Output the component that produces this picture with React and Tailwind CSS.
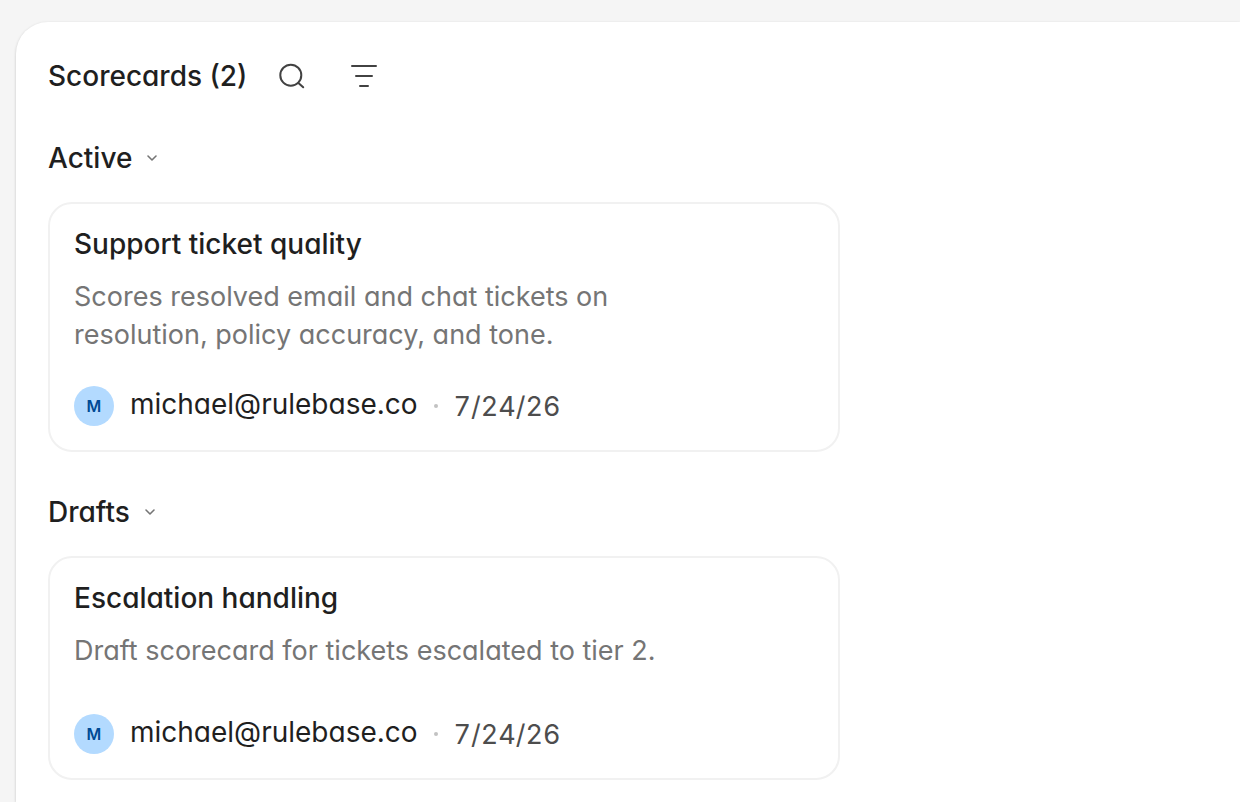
import { useState } from 'react';

const scorecards = [
  {
    id: 1,
    status: 'active',
    title: 'Support ticket quality',
    description: 'Scores resolved email and chat tickets on resolution, policy accuracy, and tone.',
    owner: 'michael@rulebase.co',
    date: '7/24/26',
  },
  {
    id: 2,
    status: 'draft',
    title: 'Escalation handling',
    description: 'Draft scorecard for tickets escalated to tier 2.',
    owner: 'michael@rulebase.co',
    date: '7/24/26',
  },
];

function SearchIcon() {
  return (
    <svg width="28" height="28" viewBox="0 0 28 28" fill="none" stroke="currentColor" strokeWidth="2" strokeLinecap="round" aria-hidden="true">
      <circle cx="12.8" cy="13.2" r="10.5" />
      <path d="M20.4 20.9 25.2 25.3" />
    </svg>
  );
}

function FilterIcon() {
  return (
    <svg width="28" height="28" viewBox="0 0 28 28" fill="none" stroke="currentColor" strokeWidth="2" strokeLinecap="round" aria-hidden="true">
      <path d="M2 4h24M6 14h16M10 24h8" />
    </svg>
  );
}

function ChevronIcon({ open }) {
  return (
    <svg
      width="16"
      height="16"
      viewBox="0 0 16 16"
      fill="none"
      stroke="currentColor"
      strokeWidth="1.6"
      strokeLinecap="round"
      strokeLinejoin="round"
      className={open ? '' : '-rotate-90'}
      aria-hidden="true"
    >
      <path d="M4 6l4 4 4-4" />
    </svg>
  );
}

function ScorecardCard({ scorecard }) {
  return (
    <article className="flex min-h-56 w-full max-w-[792px] flex-col rounded-3xl border-2 border-[#f1f1f1] bg-white p-6">
      <h3 className="text-[28px] leading-8 font-medium text-[#1f1f1f]">{scorecard.title}</h3>
      <p className="mt-[18px] max-w-[640px] text-[27px] leading-[38px] text-[#757575]">
        {scorecard.description}
      </p>
      <div className="mt-auto flex items-center pt-8">
        <span className="flex size-10 items-center justify-center rounded-full bg-[#b3daff] text-base font-semibold text-[#004a94]">
          {scorecard.owner[0].toUpperCase()}
        </span>
        <span className="ml-4 pb-1 text-[28px] leading-9 text-[#1f1f1f]">{scorecard.owner}</span>
        <span className="mx-4 size-1 rounded-full bg-[#c2c2c2]" />
        <time className="pt-0.5 text-[27px] leading-9 text-[#4d4d4d] tabular-nums">{scorecard.date}</time>
      </div>
    </article>
  );
}

function ScorecardSection({ title, items }) {
  const [open, setOpen] = useState(true);

  return (
    <section>
      <h2>
        <button
          type="button"
          onClick={() => setOpen(!open)}
          aria-expanded={open}
          className="flex h-9 items-center gap-3 text-[28px] leading-9 font-medium text-[#1f1f1f]"
        >
          {title}
          <span className="text-[#757575]">
            <ChevronIcon open={open} />
          </span>
        </button>
      </h2>
      {open && (
        <div className="mt-[26px] flex flex-col gap-6">
          {items.map((item) => (
            <ScorecardCard key={item.id} scorecard={item} />
          ))}
        </div>
      )}
    </section>
  );
}

export default function App() {
  return (
    <div className="flex min-h-screen flex-col bg-[#f5f5f5] pt-[22px] pl-4 font-['Inter',sans-serif] [font-feature-settings:'cv11'] [font-optical-sizing:none]">
      <main className="flex-1 rounded-tl-[32px] bg-white px-8 pt-[34px] pb-5 shadow-[0_1px_3px_rgba(0,0,0,0.2)]">
        {/* Header */}
        <header className="mb-11 flex h-10 items-center">
          <h1 className="text-[28px] leading-9 font-medium text-[#1f1f1f]">
            Scorecards ({scorecards.length})
          </h1>
          <div className="ml-[25px] flex gap-8 text-[#424242]">
            <button type="button" aria-label="Search" className="flex size-10 items-center justify-center">
              <SearchIcon />
            </button>
            <button type="button" aria-label="Filter" className="flex size-10 items-center justify-center">
              <FilterIcon />
            </button>
          </div>
        </header>

        {/* Scorecard groups */}
        <div className="flex flex-col gap-[42px]">
          <ScorecardSection title="Active" items={scorecards.filter((s) => s.status === 'active')} />
          <ScorecardSection title="Drafts" items={scorecards.filter((s) => s.status === 'draft')} />
        </div>
      </main>
    </div>
  );
}
